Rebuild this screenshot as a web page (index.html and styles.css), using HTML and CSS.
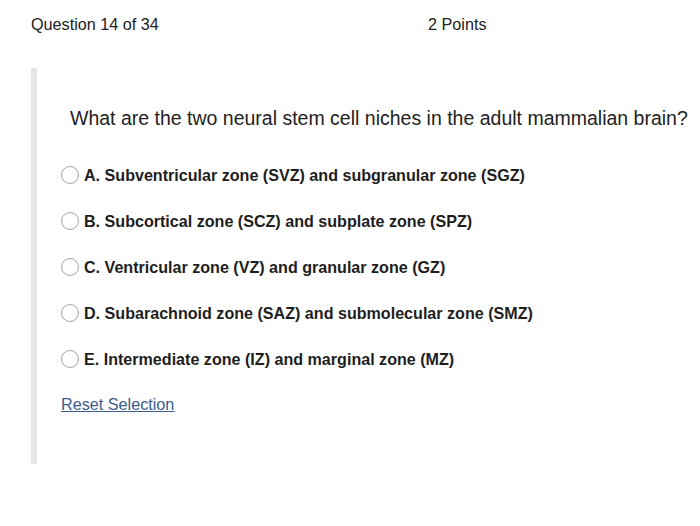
FILE: index.html
```html
<!DOCTYPE html>
<html>
<head>
<meta charset="utf-8">
<link rel="stylesheet" href="styles.css">
</head>
<body>
<div class="page">
  <header class="head">
    <span class="qnum">Question 14 of 34</span>
    <span class="points">2 Points</span>
  </header>
  <section class="card">
    <p class="question">What are the two neural stem cell niches in the adult mammalian brain?</p>
    <ul class="options">
      <li class="option"><span class="radio"></span><span class="label">A. Subventricular zone (SVZ) and subgranular zone (SGZ)</span></li>
      <li class="option"><span class="radio"></span><span class="label">B. Subcortical zone (SCZ) and subplate zone (SPZ)</span></li>
      <li class="option"><span class="radio"></span><span class="label">C. Ventricular zone (VZ) and granular zone (GZ)</span></li>
      <li class="option"><span class="radio"></span><span class="label">D. Subarachnoid zone (SAZ) and submolecular zone (SMZ)</span></li>
      <li class="option"><span class="radio"></span><span class="label">E. Intermediate zone (IZ) and marginal zone (MZ)</span></li>
    </ul>
    <a class="reset" href="#">Reset Selection</a>
  </section>
</div>
</body>
</html>
```

FILE: styles.css
```css
html, body {
  margin: 0;
  padding: 0;
  background: #ffffff;
}
body {
  font-family: "Liberation Sans", Arial, sans-serif;
  color: #222222;
}
.page {
  width: 700px;
  height: 526px;
  overflow: hidden;
}
.head {
  display: flex;
  padding: 14px 0 0 31px;
  font-size: 16.2px;
  line-height: 20px;
  color: #222;
}
.qnum {
  width: 397px;
}
.card {
  margin: 34px 0 0 31px;
  border-left: 6px solid #e6e6e6;
  height: 396px;
  box-sizing: border-box;
  padding-top: 37px;
}
.question {
  margin: 0 0 0 33px;
  font-size: 19.5px;
  line-height: 26px;
  white-space: nowrap;
}
.options {
  list-style: none;
  margin: 34px 0 0 24px;
  padding: 0;
  display: flex;
  flex-direction: column;
  gap: 26px;
}
.option {
  display: flex;
  align-items: center;
  height: 20px;
  font-weight: bold;
  font-size: 16.1px;
  color: #1e1e1e;
}
.radio {
  width: 18px;
  height: 18px;
  box-sizing: border-box;
  border: 1.3px solid #a3a3a3;
  border-radius: 50%;
  margin-right: 5px;
  flex: none;
}
.reset {
  display: inline-block;
  margin: 25px 0 0 24px;
  font-size: 16.2px;
  line-height: 20px;
  color: #3b5c8c;
  text-decoration: underline;
}
```
